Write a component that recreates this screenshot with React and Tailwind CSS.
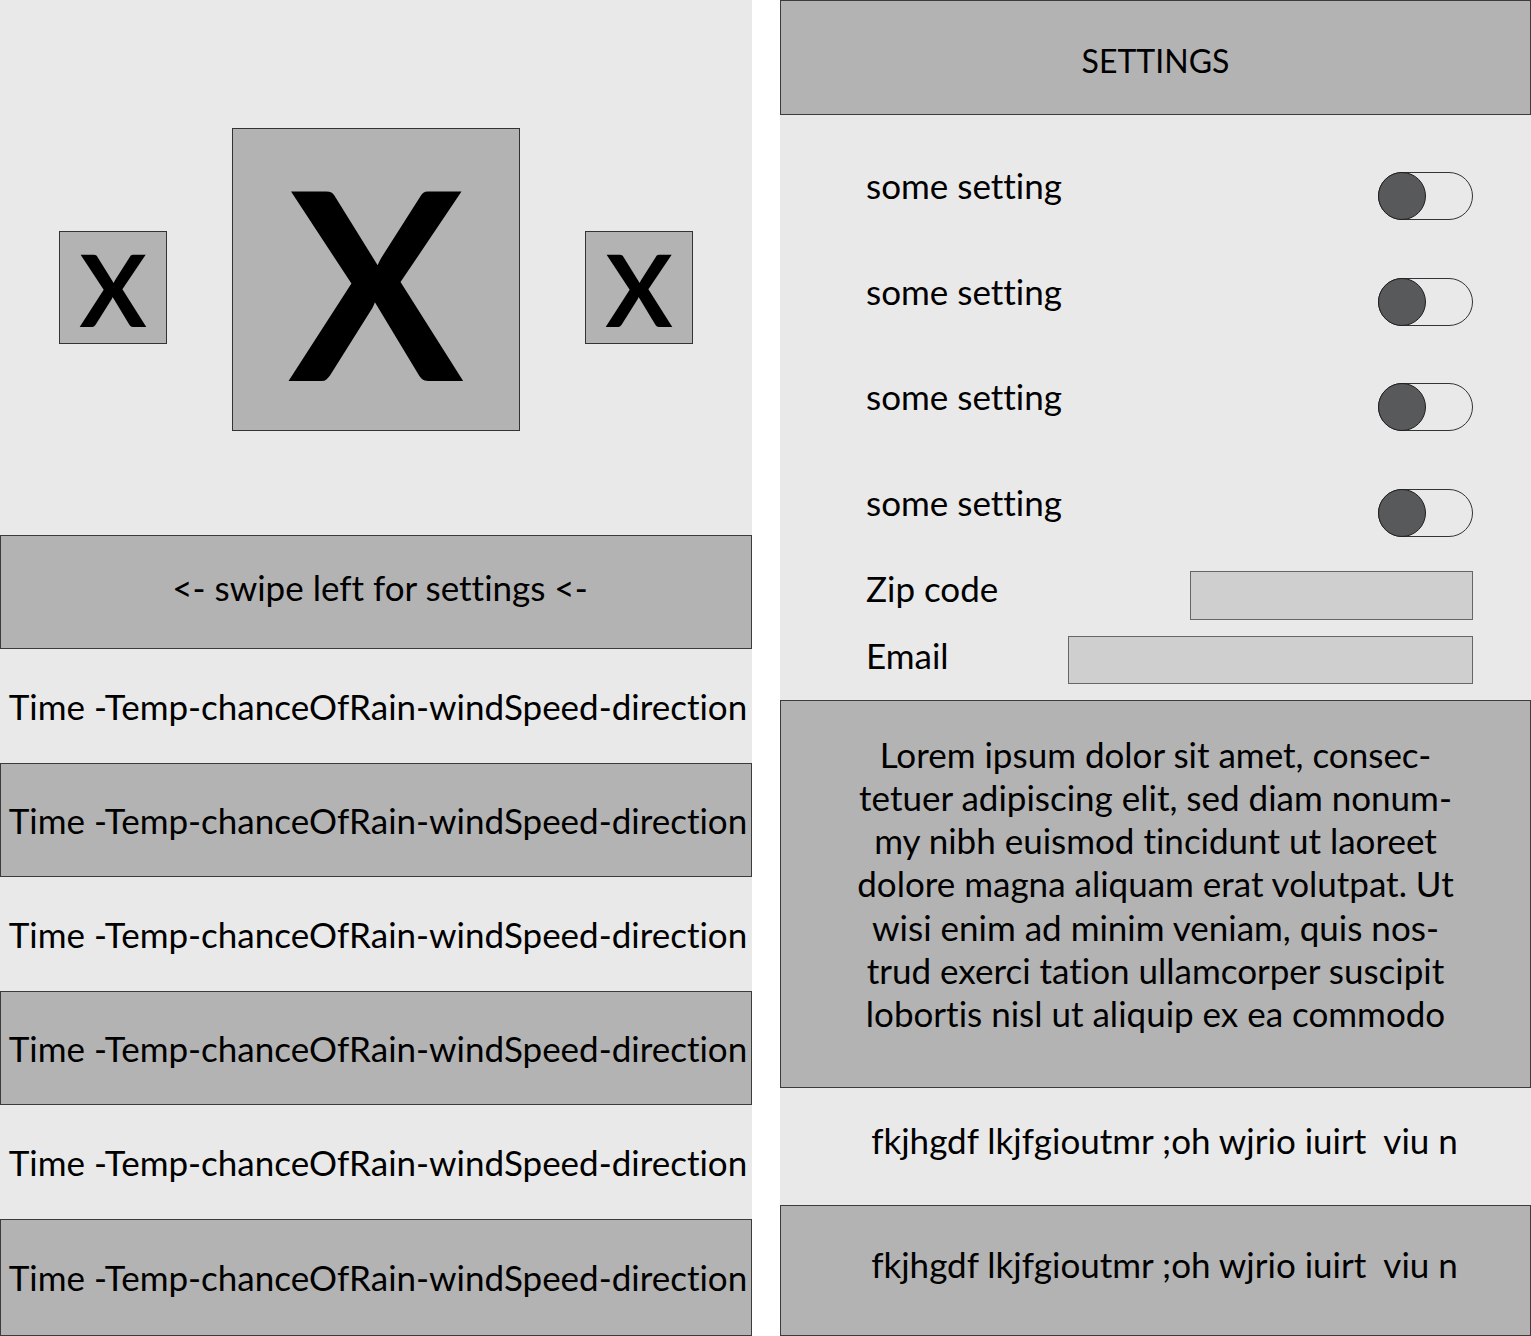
import React from 'react';

const font = { fontFamily: 'Lato, "Open Sans", sans-serif' };

const rows = [false, true, false, true, false, true];

const Toggle = () => (
  <div className="relative w-[95px] h-[48px] rounded-full border border-[#333] bg-[#e9e9e9]">
    <div className="absolute -left-px -top-px w-[48px] h-[48px] rounded-full bg-[#58595b] border border-[#231f20]" />
  </div>
);

const ForecastRow = ({ dark, last }) => (
  <div
    className={`${last ? 'flex-1' : 'h-[114px]'} flex items-center justify-center text-[35px] text-black pl-[4px] ${
      dark ? 'bg-[#b3b3b3] border border-[#3c3c3c]' : ''
    }`}
  >
    Time -Temp-chanceOfRain-windSpeed-direction
  </div>
);

export default function App() {
  return (
    <div
      className="w-[1531px] h-[1336px] flex justify-between bg-white overflow-hidden [font-variant-ligatures:none]"
      style={font}
    >
      {/* main screen */}
      <div className="w-[752px] h-full bg-[#e9e9e9] flex flex-col">
        <div className="h-[535px] flex justify-center items-start gap-[65px] pt-[128px]">
          <div className="mt-[103px] w-[108px] h-[113px] bg-[#b3b3b3] border border-[#333] flex items-center justify-center text-[100px] font-bold leading-none">
            X
          </div>
          <div className="w-[288px] h-[303px] bg-[#b3b3b3] border border-[#333] flex items-center justify-center text-[262px] font-bold leading-none">
            X
          </div>
          <div className="mt-[103px] w-[108px] h-[113px] bg-[#b3b3b3] border border-[#333] flex items-center justify-center text-[100px] font-bold leading-none">
            X
          </div>
        </div>
        <div className="h-[114px] bg-[#b3b3b3] border border-[#3c3c3c] flex items-center justify-center text-[35px] pb-[10px] pl-[8px]">
          &lt;- swipe left for settings &lt;-
        </div>
        {rows.map((dark, i) => (
          <ForecastRow key={i} dark={dark} last={i === rows.length - 1} />
        ))}
      </div>

      {/* settings screen */}
      <div className="w-[751px] h-full bg-[#e9e9e9] flex flex-col">
        <div className="h-[115px] bg-[#b3b3b3] border border-[#3c3c3c] flex items-center justify-center text-[32px] pt-[6px]">
          SETTINGS
        </div>
        <div className="flex flex-col gap-[57.5px] pt-[57px] pl-[86px] pr-[58px]">
          {[0, 1, 2, 3].map((i) => (
            <div key={i} className="flex justify-between items-start">
              <span className="text-[35px] leading-[26px]">some setting</span>
              <Toggle />
            </div>
          ))}
        </div>
        <div className="flex justify-between items-start pl-[86px] pr-[58px] mt-[34px]">
          <span className="text-[35px] leading-[34px]">Zip code</span>
          <div className="w-[283px] h-[49px] bg-[#cfcfcf] border border-[#666]" />
        </div>
        <div className="flex justify-between items-start pl-[86px] pr-[58px] mt-[16px]">
          <span className="text-[35px] leading-[38px]">Email</span>
          <div className="w-[405px] h-[48px] bg-[#cfcfcf] border border-[#666]" />
        </div>
        <div className="mt-[16px] h-[388px] bg-[#b3b3b3] border border-[#3c3c3c] pt-[32px] text-center text-[35px] leading-[43.3px]">
          Lorem ipsum dolor sit amet, consec-
          <br />
          tetuer adipiscing elit, sed diam nonum-
          <br />
          my nibh euismod tincidunt ut laoreet
          <br />
          dolore magna aliquam erat volutpat. Ut
          <br />
          wisi enim ad minim veniam, quis nos-
          <br />
          trud exerci tation ullamcorper suscipit
          <br />
          lobortis nisl ut aliquip ex ea commodo
        </div>
        <div className="h-[117px] flex items-center justify-center text-[35px] whitespace-pre pl-[18px] pb-[12px]">
          fkjhgdf lkjfgioutmr ;oh wjrio iuirt  viu n
        </div>
        <div className="flex-1 bg-[#b3b3b3] border border-[#3c3c3c] flex items-center justify-center text-[35px] whitespace-pre pl-[18px] pb-[12px]">
          fkjhgdf lkjfgioutmr ;oh wjrio iuirt  viu n
        </div>
      </div>
    </div>
  );
}
